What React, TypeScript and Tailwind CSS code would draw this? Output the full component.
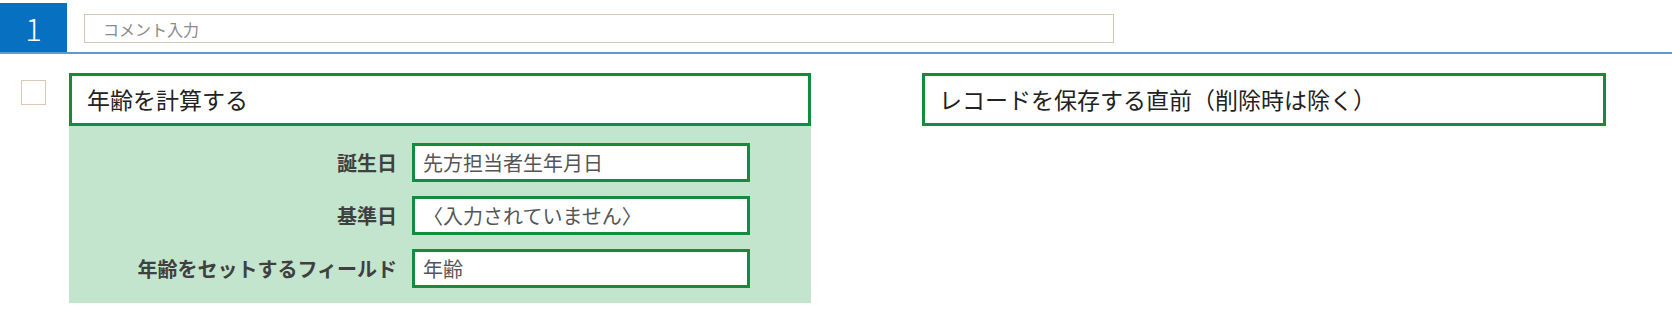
const font = { fontFamily: '"Noto Sans CJK JP", "Noto Sans", sans-serif' };

const fields = [
  { label: "誕生日", value: "先方担当者生年月日" },
  { label: "基準日", value: "〈入力されていません〉" },
  { label: "年齢をセットするフィールド", value: "年齢" },
];

export default function App() {
  return (
    <div className="w-[1672px] h-[313px] bg-white" style={font}>
      {/* step header */}
      <div className="flex items-stretch pt-[3px] border-b-2 border-[#5a9bd6]">
        <div className="w-[67px] h-[49px] bg-[#0870c1] flex items-center justify-center text-white text-[31px] font-light leading-none">
          1
        </div>
        <div className="pl-[17px] pt-[11px]">
          <div className="w-[1030px] h-[29px] border border-[#d5c6b6] bg-white flex items-center pl-[18px] text-[16px] text-[#8a8a8a]">
            コメント入力
          </div>
        </div>
      </div>

      <div className="flex items-start pt-[19px]">
        {/* checkbox */}
        <div className="ml-[21px] mt-[7px] w-[25px] h-[25px] border border-[#d8c8b6] bg-white" />

        {/* action block */}
        <div className="ml-[23px] w-[742px]">
          <div className="h-[53px] border-[3px] border-[#148c3c] bg-white flex items-center pl-[15px] text-[23px] text-[#222]">
            年齢を計算する
          </div>
          <div className="bg-[#c3e5cd] pt-[17px] pb-[15px] flex flex-col gap-[14px]">
            {fields.map((f) => (
              <div key={f.label} className="flex items-center">
                <div className="w-[328px] text-right font-bold text-[20px] leading-none text-[#404040]">
                  {f.label}
                </div>
                <div className="ml-[15px] w-[338px] h-[39px] border-[3px] border-[#148c3c] bg-white flex items-center pl-[8px] text-[20px] leading-none text-[#555]">
                  {f.value}
                </div>
              </div>
            ))}
          </div>
        </div>

        {/* trigger block */}
        <div className="ml-[111px] w-[684px] h-[53px] border-[3px] border-[#148c3c] bg-white flex items-center pl-[14px] text-[23px] text-[#222]">
          レコードを保存する直前（削除時は除く）
        </div>
      </div>
    </div>
  );
}
